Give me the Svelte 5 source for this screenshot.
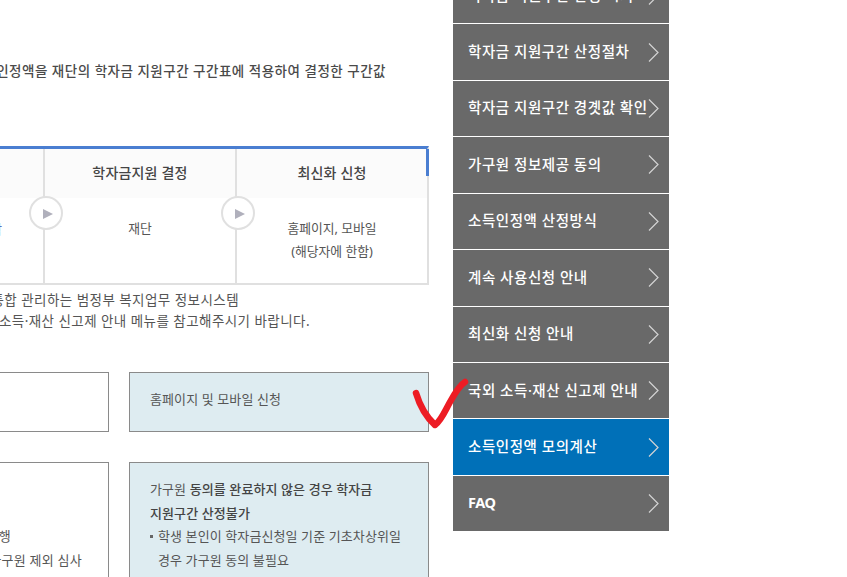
<script>
  const menu = [
    { label: "학자금 지원구간 산정 시기" },
    { label: "학자금 지원구간 산정절차" },
    { label: "학자금 지원구간 경곗값 확인" },
    { label: "가구원 정보제공 동의" },
    { label: "소득인정액 산정방식" },
    { label: "계속 사용신청 안내" },
    { label: "최신화 신청 안내" },
    { label: "국외 소득·재산 신고제 안내" },
    { label: "소득인정액 모의계산", active: true },
    { label: "FAQ", latin: true }
  ];
</script>

<div class="page">
  <main class="content">
    <p class="lead">소득인정액을 재단의 학자금 지원구간 구간표에 적용하여 결정한 구간값</p>

    <div class="flow">
      <div class="step first">
        <div class="head"></div>
        <div class="body"><span class="cut">통합</span></div>
      </div>
      <div class="step">
        <div class="head">학자금지원 결정</div>
        <div class="body">재단</div>
        <span class="arrow"></span>
      </div>
      <div class="step">
        <div class="head">최신화 신청</div>
        <div class="body">홈페이지, 모바일<br />(해당자에 한함)</div>
        <span class="arrow"></span>
      </div>
      <span class="corner"></span>
    </div>

    <div class="note">
      <p class="l1">사회보장정보시스템: 복지사업을 통합 관리하는 범정부 복지업무 정보시스템</p>
      <p class="l2">국외 소득·재산 신고 관련 내용은 국외 소득·재산 신고제 안내 메뉴를 참고해주시기 바랍니다.</p>
    </div>

    <div class="boxes one">
      <div class="box"></div>
      <div class="box blue">홈페이지 및 모바일 신청</div>
    </div>

    <div class="boxes two">
      <div class="box">
        <p class="right r1">진행</p>
        <p class="right r2">가구원 제외 심사</p>
      </div>
      <div class="box blue">
        <p>가구원 <b>동의를 완료하지 않은 경우 학자금<br />지원구간 산정불가</b></p>
        <p class="bullet">학생 본인이 학자금신청일 기준 기초차상위일<br />경우 가구원 동의 불필요</p>
      </div>
    </div>
  </main>

  <nav class="side">
    {#each menu as item}
      <a class="item" class:active={item.active} class:latin={item.latin} href="#top">
        <span>{item.label}</span>
        <svg class="chev" width="11" height="20" viewBox="0 0 11 20">
          <path d="M1 1 L10 10 L1 19" fill="none" stroke="#d4d4d4" stroke-width="1.2" />
        </svg>
      </a>
    {/each}
  </nav>

  <svg class="mark" width="60" height="60" viewBox="0 0 60 60">
    <path d="M4 18 C7 28 12 40 23 50 C29 46 33 36 38 27 C43 18 48 10 53 7" fill="none" stroke="#ed1c24" stroke-width="6.5" stroke-linecap="round" stroke-linejoin="round" />
  </svg>
</div>

<style>
  :global(body) {
    margin: 0;
    background: #fff;
    overflow: hidden;
  }
  .page {
    position: relative;
    display: flex;
    align-items: flex-start;
    gap: 24px;
    width: 847px;
    height: 577px;
    overflow: hidden;
    font-family: "Noto Sans", "Noto Sans CJK KR", sans-serif;
    color: #555;
    font-size: 13px;
  }
  .content {
    flex: none;
    width: 800px;
    margin-left: -371px;
  }
  .lead {
    margin: 62px 0 0;
    text-align: right;
    padding-right: 43px;
    line-height: 18px;
    font-weight: 500;
    font-size: 13.5px;
    letter-spacing: 0.5px;
    white-space: nowrap;
    color: #4a4a4a;
  }
  .flow {
    position: relative;
    display: flex;
    margin-top: 66px;
    height: 139px;
    box-sizing: border-box;
    border-top: 3px solid #4a7ed1;
    border-bottom: 2px solid #e0e0e0;
    border-right: 2px solid #e0e0e0;
  }
  .corner {
    position: absolute;
    top: 0;
    right: -2px;
    width: 3px;
    height: 27px;
    background: #4a7ed1;
  }
  .step {
    position: relative;
    flex: none;
    width: 192px;
    box-sizing: border-box;
    border-left: 2px solid #e0e0e0;
  }
  .step.first {
    flex: 1;
  }
  .head {
    height: 49px;
    box-sizing: border-box;
    padding-bottom: 3px;
    display: flex;
    align-items: center;
    justify-content: center;
    background: #fbfbfb;
    font-size: 14px;
    letter-spacing: 0.2px;
    font-weight: 500;
    color: #444;
  }
  .body {
    padding-top: 19px;
    text-align: center;
    line-height: 23px;
    font-size: 12.8px;
  }
  .cut {
    position: absolute;
    right: 41px;
    top: 69px;
    color: #5a6fc0;
  }
  .arrow {
    position: absolute;
    left: -16px;
    top: 47px;
    width: 34px;
    height: 34px;
    box-sizing: border-box;
    border: 2px solid #e0e0e0;
    border-radius: 50%;
    background: #fff;
  }
  .arrow::after {
    content: "";
    position: absolute;
    left: 12px;
    top: 11px;
    border-left: 10px solid #b0b0bc;
    border-top: 5.5px solid transparent;
    border-bottom: 5.5px solid transparent;
  }
  .note {
    margin-top: 5px;
    line-height: 21px;
    font-size: 13.5px;
    letter-spacing: 0.45px;
    text-align: right;
    white-space: nowrap;
  }
  .note p {
    margin: 0;
  }
  .l1 {
    padding-right: 190px;
  }
  .l2 {
    padding-right: 119px;
  }
  .boxes {
    display: flex;
    justify-content: flex-end;
    gap: 20px;
  }
  .boxes.one {
    margin-top: 40px;
  }
  .boxes.two {
    margin-top: 30px;
  }
  .box {
    width: 300px;
    box-sizing: border-box;
    border: 1px solid #8a8a8a;
    padding: 0 20px;
    background: #fff;
    letter-spacing: 0.1px;
  }
  .box.blue {
    background: #deecf1;
  }
  .one .box {
    height: 60px;
    display: flex;
    align-items: center;
    padding-bottom: 7px;
  }
  .two .box {
    height: 200px;
    padding-top: 15px;
    line-height: 23.5px;
  }
  .box p {
    margin: 0;
  }
  .box b {
    font-weight: 500;
    color: #444;
  }
  .bullet {
    position: relative;
    padding-left: 8px;
    white-space: nowrap;
  }
  .bullet::before {
    content: "";
    position: absolute;
    left: 0;
    top: 10px;
    width: 3px;
    height: 3px;
    background: #666;
  }
  .two .right {
    position: relative;
    top: 47px;
    text-align: right;
    white-space: nowrap;
    letter-spacing: 0.25px;
  }
  .two .r1 {
    margin-right: 77px;
  }
  .two .r2 {
    margin-right: 6px;
  }
  .side {
    flex: none;
    width: 216px;
    margin-top: -32.14px;
    display: flex;
    flex-direction: column;
  }
  .item {
    display: flex;
    align-items: center;
    justify-content: space-between;
    flex: none;
    height: 56.44px;
    box-sizing: border-box;
    padding: 0 10px 3px 15px;
    border-bottom: 1px solid #fff;
    background: #696969;
    color: #fff;
    font-size: 14.5px;
    letter-spacing: 0.55px;
    font-weight: 500;
    text-decoration: none;
    white-space: nowrap;
  }
  .item:last-child {
    height: 55.4px;
    border-bottom: 0;
  }
  .item.active {
    background: #0070b8;
  }
  .item.latin {
    font-weight: 700;
    letter-spacing: -0.4px;
  }
  .chev {
    flex: none;
    transform: translateY(1.5px);
  }
  .mark {
    position: absolute;
    left: 412px;
    top: 375px;
  }
</style>
